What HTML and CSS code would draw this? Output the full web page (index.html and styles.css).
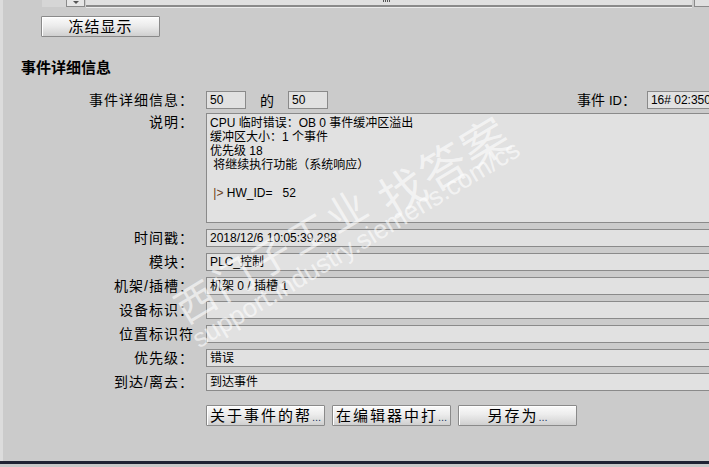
FILE: index.html
```html
<!DOCTYPE html>
<html lang="zh-CN">
<head>
    <meta charset="utf-8">
    <meta name="viewport" content="width=device-width, initial-scale=1">
    <title>事件详细信息</title>
    <link rel="stylesheet" href="styles.css">
</head>
<body>
<div class="page">
    <div class="hscroll">
        <div class="hs-cell"></div>
        <div class="hs-drop"><span class="hs-caret"></span></div>
        <div class="hs-track"><span class="hs-grip"></span></div>
        <div class="hs-end"></div>
    </div>

    <div class="freeze-row">
        <button class="btn btn-freeze">冻结显示</button>
    </div>

    <h2 class="section-title">事件详细信息</h2>

    <div class="form">
        <div class="row row-first">
            <div class="label">事件详细信息：</div>
            <div class="pager">
                <div class="field field-small">50</div>
                <span class="of">的</span>
                <div class="field field-small">50</div>
                <span class="label event-id-label">事件 <span class="latin">ID</span>：</span>
                <div class="field field-id">16# 02:350</div>
            </div>
        </div>

        <div class="row row-desc">
            <div class="label">说明：</div>
            <div class="field desc">CPU 临时错误：OB 0 事件缓冲区溢出<br>缓冲区大小：1 个事件<br>优先级 18<br>&nbsp;将继续执行功能（系统响应）<br><br>&nbsp;<span class="arrow">|&gt;</span> HW_ID=&nbsp;&nbsp;&nbsp;52</div>
        </div>

        <div class="row">
            <div class="label">时间戳：</div>
            <div class="field">2018/12/6 10:05:39.288</div>
        </div>
        <div class="row">
            <div class="label">模块：</div>
            <div class="field">PLC_控制</div>
        </div>
        <div class="row">
            <div class="label">机架/插槽：</div>
            <div class="field">机架 0 / 插槽 1</div>
        </div>
        <div class="row">
            <div class="label">设备标识：</div>
            <div class="field"></div>
        </div>
        <div class="row">
            <div class="label">位置标识符</div>
            <div class="field"></div>
        </div>
        <div class="row">
            <div class="label">优先级：</div>
            <div class="field">错误</div>
        </div>
        <div class="row">
            <div class="label">到达/离去：</div>
            <div class="field">到达事件</div>
        </div>

        <div class="actions">
            <button class="btn btn-action">关于事件的帮<span class="dots">...</span></button>
            <button class="btn btn-action">在编辑器中打<span class="dots">...</span></button>
            <button class="btn btn-action">另存为<span class="dots">...</span></button>
        </div>
    </div>

    <div class="watermark">
        <span class="wm wm-brand">西门子工业</span>
        <span class="wm wm-url">support.industry.siemens.com/cs</span>
        <span class="wm wm-find">找答案</span>
    </div>
</div>
<div class="bottom-bar"></div>
<div class="bottom-rest"></div>
</body>
</html>
```

FILE: styles.css
```css
html, body {
    margin: 0;
    padding: 0;
}
body {
    font-family: "Liberation Sans", "Noto Sans CJK SC", sans-serif;
    background-color: #cbcbcb;
    color: #000;
    width: 709px;
    height: 467px;
    overflow: hidden;
    display: flex;
    flex-direction: column;
}
.page {
    position: relative;
    flex: 1;
    border-left: 3px solid #dcdcdc;
    overflow: hidden;
}

/* top scroll strip */
.hscroll {
    display: flex;
    height: 7px;
}
.hs-cell {
    width: 24px;
    margin-left: 39px;
    background-color: #d6d6d6;
}
.hs-drop {
    position: relative;
    width: 17px;
    background-color: #e6e6e6;
    border: 1px solid #8a8a8a;
    border-top: none;
}
.hs-caret {
    position: absolute;
    left: 6px;
    top: 1px;
    border-left: 3px solid transparent;
    border-right: 3px solid transparent;
    border-top: 3px solid #555;
}
.hs-track {
    position: relative;
    width: 606px;
    background-color: #e0e0e0;
    border-bottom: 2px solid #8a8a8a;
    box-shadow: 0 1px 0 #ececec;
    margin-left: 1px;
}
.hs-grip {
    position: absolute;
    left: 297px;
    top: 0;
    width: 8px;
    height: 2px;
    background: repeating-linear-gradient(90deg, #555 0 1px, transparent 1px 2px);
}
.hs-end {
    flex: 1;
    margin-left: 2px;
    background-color: #e0e0e0;
    border-left: 1px solid #8a8a8a;
    border-bottom: 1px solid #8a8a8a;
}

/* buttons */
.btn {
    font-family: "Liberation Sans", "Noto Sans CJK SC", sans-serif;
    height: 21px;
    padding: 0;
    border: 1px solid #8a8a8a;
    border-radius: 1px;
    background: linear-gradient(#fbfbfb, #ececec 45%, #dadada 80%, #cfcfcf);
    box-shadow: inset 1px 1px 0 #fff;
    color: #000;
    font-size: 15px;
    letter-spacing: 1px;
    line-height: 19px;
    cursor: pointer;
}
.freeze-row {
    margin-top: 9px;
    padding-left: 38px;
}
.btn-freeze {
    display: block;
    width: 119px;
}
.dots {
    font-size: 11px;
    letter-spacing: 0;
    color: #1b3a66;
}

.section-title {
    margin: 21px 0 0 18px;
    font-size: 15px;
    line-height: 20px;
    font-weight: bold;
}

/* form */
.form {
    width: 730px;
    margin-top: 12px;
}
.row {
    display: grid;
    grid-template-columns: 191px 1fr;
    column-gap: 12px;
    align-items: center;
    margin-top: 6px;
}
.row-first {
    margin-top: 0;
}
.row-desc {
    margin-top: 3px;
    align-items: start;
}
.label {
    font-size: 14px;
    letter-spacing: 1px;
    text-align: right;
    line-height: 18px;
    white-space: nowrap;
}
.latin {
    font-size: 13px;
    letter-spacing: 0;
}
.field {
    box-sizing: border-box;
    height: 18px;
    background-color: #e1e1e1;
    border: 1px solid #8a8a8a;
    padding: 0 3px;
    font-size: 12px;
    line-height: 16px;
    white-space: nowrap;
    overflow: hidden;
}
.pager {
    display: flex;
    align-items: center;
}
.field-small {
    width: 40px;
}
.of {
    width: 42px;
    text-align: center;
    font-size: 14px;
}
.event-id-label {
    margin-left: 249px;
    letter-spacing: 0;
}
.field-id {
    width: 90px;
    margin-left: 11px;
}
.desc {
    height: 110px;
    padding-top: 2px;
    line-height: 14px;
    white-space: normal;
}
.arrow {
    color: #6a3d16;
}

.actions {
    display: flex;
    gap: 7px;
    margin-top: 14px;
    padding-left: 203px;
}
.btn-action {
    width: 119px;
    letter-spacing: 2px;
}

/* watermark over the form */
.watermark {
    position: absolute;
    inset: 0;
    pointer-events: none;
}
.wm {
    position: absolute;
    color: rgba(255, 255, 255, 0.6);
    white-space: nowrap;
    transform-origin: 0 100%;
    transform: rotate(-31deg);
    line-height: 1;
}
.wm-brand {
    left: 186px;
    top: 290px;
    font-size: 40px;
    letter-spacing: 4px;
}
.wm-url {
    left: 198px;
    top: 326px;
    font-size: 26px;
}
.wm-find {
    left: 392px;
    top: 178px;
    font-size: 46px;
    letter-spacing: 2px;
}

.bottom-bar {
    height: 3px;
    background-color: #1f2233;
}
.bottom-rest {
    height: 3px;
    background-color: #c8c8c8;
}
```
